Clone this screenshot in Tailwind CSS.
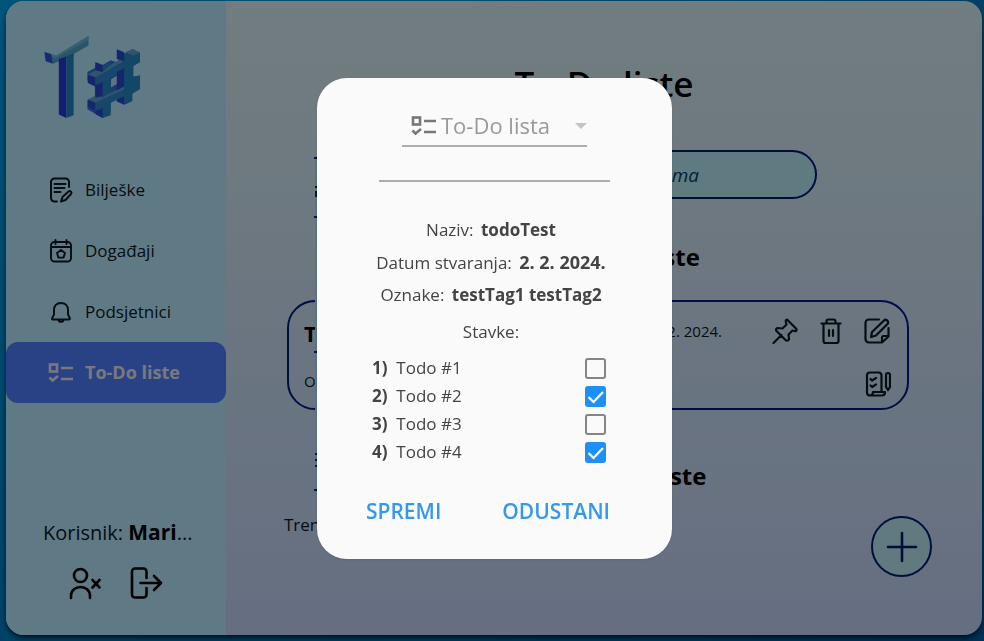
<!DOCTYPE html>
<html lang="hr">
<head>
<meta charset="utf-8">
<meta name="viewport" content="width=device-width, initial-scale=1">
<title>To-Do liste</title>
<script src="https://cdn.jsdelivr.net/npm/@tailwindcss/browser@4"></script>
</head>
<body class="min-h-screen bg-linear-to-br from-[#009be0] to-[#005a9e] font-['Open_Sans','Noto_Sans',sans-serif] text-[#0c1820]">
<svg class="hidden" aria-hidden="true">
  <symbol id="todo" viewBox="0 0 26 20" fill="none" stroke="currentColor" stroke-width="2.6">
    <rect x="2" y="1.500" width="7" height="7"/><path d="M13 5h12M13 16h12M1.500 14.500l3 3L10 13"/>
  </symbol>
</svg>
<div class="flex min-h-screen pt-px pr-[2px] pb-[6px] pl-[6px]">
  <div class="flex flex-1 overflow-hidden rounded-[18px] bg-linear-to-b from-[#d1e7eb] to-[#bccdf0] shadow-md shadow-black/60">
    <aside class="flex w-[220px] shrink-0 flex-col bg-[#b1e1f6]">
      <a href="#" aria-label="T#" class="mt-[34px] ml-[38px] block w-[97px]">
        <svg viewBox="132 102 288 252" class="h-[85px] w-[97px]">
          <path fill="#2f50d0" d="M133 152l21 6 5 29-22-7z"/>
          <path fill="#4a9cc8" d="M154 163l16 2 94-60v28l-44 25v7l-22 6-39 16z"/>
          <path fill="#66b0d0" d="M154 158l14 5 96-58v12l-102 56z"/>
          <path fill="#2636d0" d="M176 173l22-7v182l-22-10z"/>
          <path fill="#2080b8" d="M198 166l22-10v184l-22 8z"/>
          <path fill="#2f6fd0" d="M285 183l21 8 24-14 18 6 22-25 24-14 23 10v28l-20 12v32l20-4v40l-23 14v22l-22 11-24-15-18 8-0 28-24 18-21-12-24-14v-26l22-10v-38l-22-11v-25l22-12z"/>
          <path fill="#2484bd" d="M306 194l24-12v158l-24 8zM370 158l24-12 23 10v26l-20 12v32l20-4v38l-23 14v22l-24 11z"/>
          <path fill="#2f84c6" d="M284 228l86-44v24l-86 44zM284 303l86-44v24l-86 44z"/>
          <path fill="#5a9ccc" d="M262 219l22-12 22 5 24-22 36-20v12l-82 46zM262 293l22-11 22 5 24-14 40-18v8l-86 40zM372 153l25-9 20 10-20 9z"/>
          <path fill="#2746cc" d="M262 220l22 8v27l-22-11zM262 294l22 9v24l-22-13zM285 183l21 8v21l-21-6zM285 252l21-11v40l-21 8zM348 144l22 9v27l-22-7zM348 212l22-12v54l-22 12zM285 328l21-8v28l-21-12zM348 294l22-10v25l-22-10z"/>
          <path fill="#aed6e9" d="M331 233l17-10v24l-17 11z"/>
        </svg>
      </a>
      <nav class="mt-[39px] flex flex-col text-[17px]">
        <a href="#" class="flex h-[61px] items-center gap-[11px] pl-[42px]">
          <svg viewBox="0 0 26 26" class="size-[26px]" fill="none" stroke="currentColor" stroke-width="2" stroke-linecap="round" stroke-linejoin="round"><path d="M21 10V5a3.500 3.500 0 0 0-3.500-3.500h-11A3.500 3.500 0 0 0 3 5v16a3.500 3.500 0 0 0 3.500 3.500H9M6.500 7h11M6.500 11h10M6.500 15h6"/><path d="M13 24.500l1.500-4.500 6-5.500c1.500-1.500 4 .8 2.500 2.500l-5.500 6z"/></svg>
          Bilješke</a>
        <a href="#" class="flex h-[61px] items-center gap-[11px] pl-[42px]">
          <svg viewBox="0 0 26 26" class="size-[26px]" fill="none" stroke="currentColor" stroke-width="1.900" stroke-linecap="round" stroke-linejoin="round"><rect x="3" y="4" width="20" height="19.500" rx="3.500"/><path d="M3 9h20M7.500 2v4M18.500 2v4M13 12l4 3-1.500 4.600h-5L9 15z"/></svg>
          Događaji</a>
        <a href="#" class="flex h-[61px] items-center gap-[11px] pl-[42px]">
          <svg viewBox="0 0 26 26" class="size-[26px]" fill="none" stroke="currentColor" stroke-width="1.900" stroke-linecap="round" stroke-linejoin="round"><path d="M13 4c-4.500 0-7 3-7 7v4.500L4.200 19c-.4 1 0 1.500 1 1.500h15.600c1 0 1.400-.5 1-1.500L20 15.500V11c0-4-2.500-7-7-7zM10.500 21c.5 2.500 4.500 2.500 5 0"/></svg>
          Podsjetnici</a>
        <a href="#" aria-current="page" class="flex h-[61px] items-center gap-[11px] rounded-xl bg-[#4a7bf5] pl-[42px] text-[18px] font-bold text-[#e0e0e8]">
          <svg class="h-5 w-[26px]"><use href="#todo"/></svg>
          To-Do liste</a>
      </nav>
      <div class="mt-auto pb-[35px]">
        <p class="pl-[37px] text-[20px] leading-7">Korisnik: <b class="text-[21px] text-black">Mari</b>...</p>
        <div class="mt-[19px] flex gap-7 pl-[62px] text-black">
          <button type="button" aria-label="Izbriši korisnika"><svg viewBox="0 0 34 34" class="size-[34px]" fill="none" stroke="currentColor" stroke-width="2.600" stroke-linecap="round"><circle cx="12.500" cy="9.500" r="6.500"/><path d="M3 32v-2c0-12 19-12 19 0v2M24.500 14l7 7.500M31.500 14l-7 7.500"/></svg></button>
          <button type="button" aria-label="Odjava"><svg viewBox="0 0 34 34" class="size-[34px]" fill="none" stroke="currentColor" stroke-width="2.600" stroke-linecap="round" stroke-linejoin="round"><path d="M16.500 12V5.500a3 3 0 0 0-3-3H5a3 3 0 0 0-3 3v23a3 3 0 0 0 3 3h8.500a3 3 0 0 0 3-3V22M10.500 17H31M24 10l7 7-7 7"/></svg></button>
        </div>
      </div>
    </aside>
    <main class="relative flex flex-1 flex-col">
      <h1 class="mt-[59px] text-center text-[35px] leading-[48px] font-semibold text-black">To-Do liste</h1>
      <input type="search" aria-label="Pretraži" placeholder="Pretraži po oznakama" class="mx-auto mt-[42px] h-[49px] w-[426px] rounded-full border-2 border-[#001a70] bg-[#b1e1f0] pr-[99px] text-right text-[19px] italic placeholder:text-[#0a3b63]">
      <h2 class="mt-[42px] text-center text-[24px] leading-8 font-bold text-black">Moje To-Do liste</h2>
      <article class="mt-[27px] mr-[73px] ml-[61px] flex h-[110px] rounded-[28px] border-2 border-[#001a80] pt-[15px] pr-4 pl-[15px]">
        <div class="flex flex-1 flex-col">
          <h3 class="text-[22px] leading-8 font-bold text-black">Test</h3>
          <p class="mt-[22px] text-[15px] leading-5">OZNAKE:</p>
        </div>
        <time class="mr-[49px] pt-[2px] text-[15px] leading-6">2. 2. 2024.</time>
        <div class="grid grid-cols-3 content-start gap-x-[18px] gap-y-[25px]">
          <button type="button" aria-label="Prikvači"><svg viewBox="0 0 28 28" class="size-7" fill="none" stroke="currentColor" stroke-width="2.200" stroke-linecap="round" stroke-linejoin="round"><path d="M2.500 26l8-8M17 3.500l8 8c1.500 1.500 0 3-1.500 2.500l-2-.5-4 4 .5 5c-1 1.500-2.500 1.500-3.500.5l-9-9c-1-1-.5-2.500 1-3l5 .5 4-4-.7-2.500c-.5-2 1-3 2.200-1.500z"/></svg></button>
          <button type="button" aria-label="Obriši"><svg viewBox="0 0 28 28" class="size-7" fill="none" stroke="currentColor" stroke-width="2.200" stroke-linecap="round" stroke-linejoin="round"><path d="M4.500 6.500h19M9.500 6V4.500a2 2 0 0 1 2-2h5a2 2 0 0 1 2 2V6M6.500 6.500V24a2 2 0 0 0 2 2h11a2 2 0 0 0 2-2V6.500M12 13v6M16 13v6"/></svg></button>
          <button type="button" aria-label="Uredi"><svg viewBox="0 0 28 28" class="size-7" fill="none" stroke="currentColor" stroke-width="2.200" stroke-linecap="round" stroke-linejoin="round"><path d="M16 2.500H6A3.500 3.500 0 0 0 2.500 6v16A3.500 3.500 0 0 0 6 25.500h13l6.500-6V11M19 25v-4.500a1.500 1.500 0 0 1 1.500-1.500H25M8 20l1-5L21 3.500c2-2 5.500 1 3.500 3.500L13 18.500z"/></svg></button>
          <button type="button" aria-label="Stavke" class="col-start-3"><svg viewBox="0 0 28 28" class="size-7" fill="none" stroke="currentColor" stroke-width="2.200" stroke-linecap="round" stroke-linejoin="round"><path d="M18.500 21V5A3 3 0 0 0 15.500 2.500H7A3 3 0 0 0 4 5v18a3 3 0 0 0 3 2.500h12c2 0 3-1.500 3-3.500H10c0 2-1 3.500-3 3.500M7.500 9l1.500 1.500L13 8M7.500 15.500L9 17l4-2.500M23 5a2 2 0 0 1 4 0v12l-2 3-2-3z"/></svg></button>
        </div>
      </article>
      <h2 class="mt-[50px] text-center text-[24px] leading-8 font-bold text-black">Druge To-Do liste</h2>
      <p class="mt-[21px] ml-[58px] text-[17px] leading-6">Tren</p>
      <button type="button" aria-label="Dodaj" class="absolute right-[50px] bottom-[58px] flex size-[61px] items-center justify-center rounded-full border-2 border-[#001a70] bg-[#b1e1ea] text-[#001a70]">
        <svg viewBox="0 0 32 32" class="size-8" stroke="currentColor" stroke-width="2.600" stroke-linecap="round"><path d="M16 2v28M2 16h28"/></svg>
      </button>
    </main>
  </div>
</div>

<div class="fixed inset-0 flex items-center justify-center bg-black/46 pb-[4px] pl-[5px]">
  <svg class="absolute top-[156px] left-[314px] h-[336px] w-1" viewBox="0 0 4 336" fill="#001840"><path fill="#5b7787" d="M1 0h3v336H1z"/><path d="M0 1h3v2H0zM1 30h2v2H1zM1 35h2v6H1zM0 60h3v2H0zM0 195h3v2H0zM1 297h2v2H1zM1 303h2v2H1zM1 309h2v2H1zM0 333h3v2H0z"/></svg>
  <form role="dialog" aria-label="To-Do lista" class="relative flex w-[355px] flex-col rounded-[30px] bg-[#fafafa] px-[49px] pt-7 pb-[30px] text-[17px] text-[#444] shadow-sm">
    <div class="mx-auto flex h-[41px] w-[185px] items-center border-b-2 border-[#adadad] pr-0 pl-[9px] text-[#777]">
      <svg class="h-5 w-[26px] shrink-0"><use href="#todo"/></svg>
      <select aria-label="Vrsta" disabled class="ml-1 min-w-0 flex-1 appearance-none bg-transparent text-[22px] text-[#999] opacity-100"><option>To-Do lista</option></select>
      <svg viewBox="0 0 12 6" class="h-[6px] w-3" fill="#c4c4c4"><path d="M0 0h12L6 6z"/></svg>
    </div>
    <input type="text" aria-label="Oznaka" class="mx-auto h-[35px] w-[231px] border-b-2 border-[#adadad] bg-transparent">
    <div class="mt-[34px] flex flex-col gap-1 pr-[7px] text-center leading-7">
      <p>Naziv: <b class="ml-[3px]">todoTest</b></p>
      <p>Datum stvaranja: <b class="ml-[3px] text-[18px]">2. 2. 2024.</b></p>
      <p>Oznake: <b class="ml-[3px]">testTag1 testTag2</b></p>
      <p class="mt-[5px]">Stavke:</p>
    </div>
    <ol class="mt-2 pr-[17px] pl-[6px] leading-7">
      <li class="flex items-center justify-between"><label for="t1"><b>1)</b>&nbsp; Todo #1</label><span class="relative size-[21px]"><input id="t1" type="checkbox" class="block size-[21px] appearance-none rounded-[3px] border-2 border-[#858585] checked:border-[#1e90f5] checked:bg-[#1e90f5]"></span></li>
      <li class="flex items-center justify-between"><label for="t2"><b>2)</b>&nbsp; Todo #2</label><span class="relative size-[21px]"><input id="t2" type="checkbox" checked class="block size-[21px] appearance-none rounded-[3px] border-2 border-[#858585] checked:border-[#1e90f5] checked:bg-[#1e90f5]"><svg viewBox="0 0 21 21" class="pointer-events-none absolute inset-0" fill="none" stroke="#fff" stroke-width="2.200"><path d="M3.500 11l5 5L18 6"/></svg></span></li>
      <li class="flex items-center justify-between"><label for="t3"><b>3)</b>&nbsp; Todo #3</label><span class="relative size-[21px]"><input id="t3" type="checkbox" class="block size-[21px] appearance-none rounded-[3px] border-2 border-[#858585] checked:border-[#1e90f5] checked:bg-[#1e90f5]"></span></li>
      <li class="flex items-center justify-between"><label for="t4"><b>4)</b>&nbsp; Todo #4</label><span class="relative size-[21px]"><input id="t4" type="checkbox" checked class="block size-[21px] appearance-none rounded-[3px] border-2 border-[#858585] checked:border-[#1e90f5] checked:bg-[#1e90f5]"><svg viewBox="0 0 21 21" class="pointer-events-none absolute inset-0" fill="none" stroke="#fff" stroke-width="2.200"><path d="M3.500 11l5 5L18 6"/></svg></span></li>
    </ol>
    <div class="mt-[27px] flex justify-between pr-[13px] text-[21px] leading-9 font-semibold text-[#3498eb]">
      <button type="submit">SPREMI</button>
      <button type="button">ODUSTANI</button>
    </div>
  </form>
</div>
</body>
</html>
